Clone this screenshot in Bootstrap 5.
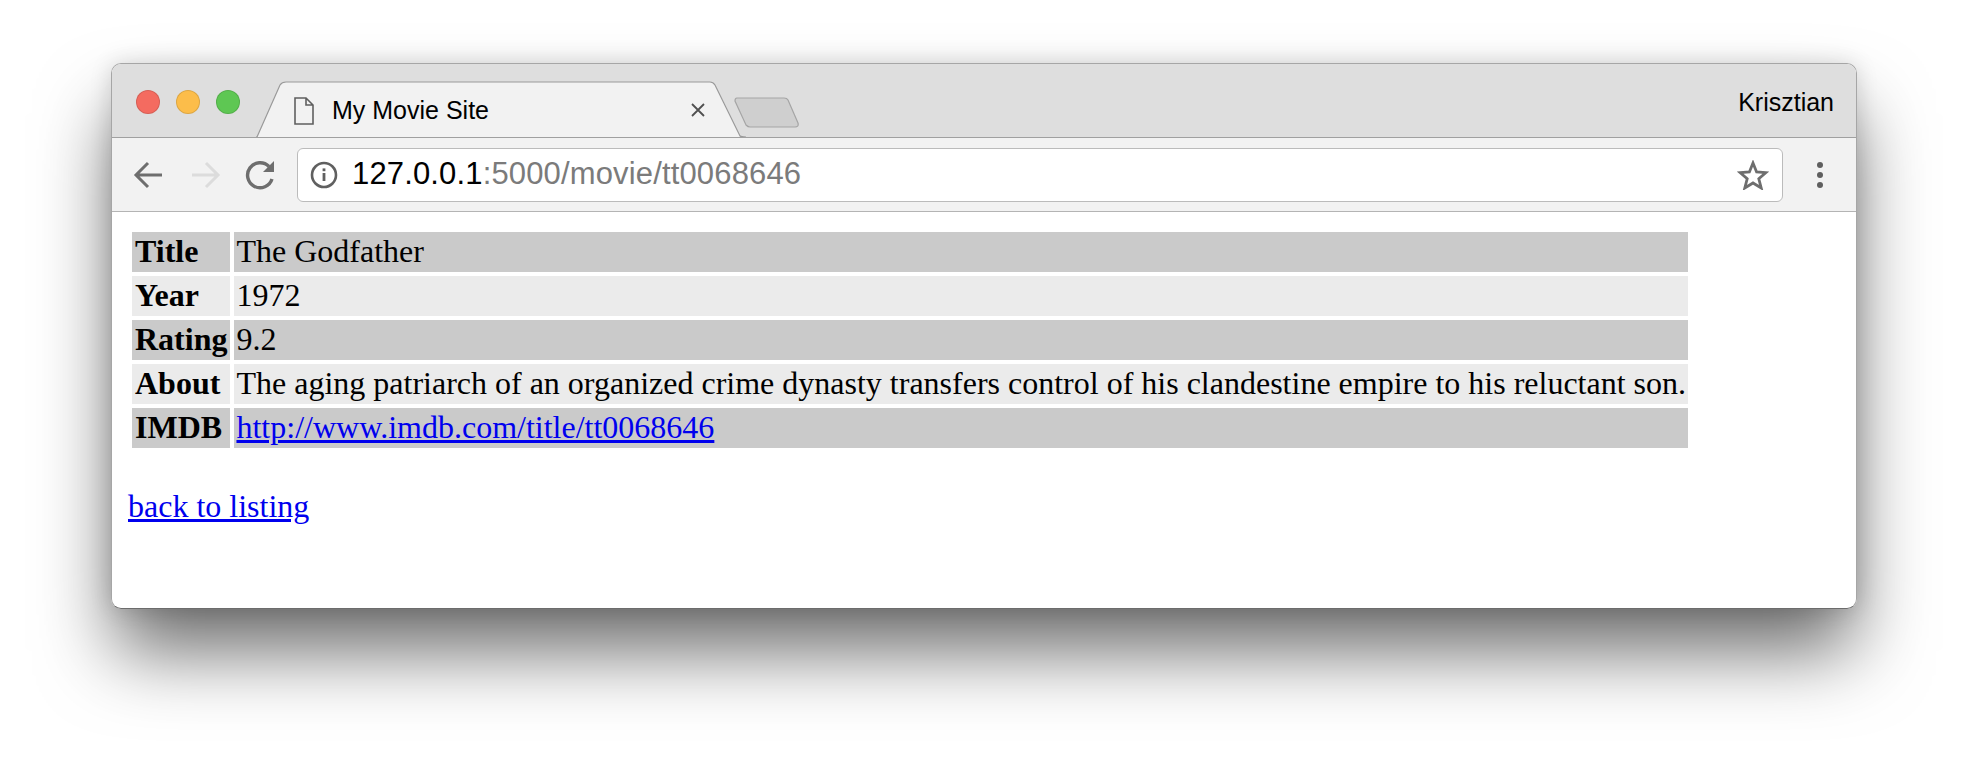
<!DOCTYPE html>
<html lang="en">
<head>
  <meta charset="UTF-8" />
  <title>My Movie Site</title>
  <meta name="viewport" content="width=device-width, initial-scale=1">
  <link href="https://cdn.jsdelivr.net/npm/bootstrap@5.3.3/dist/css/bootstrap.min.css" rel="stylesheet">
  <style>
    body { background: #fff; font-family: "Liberation Sans", Arial, sans-serif; }
    .desk { width: 1968px; height: 768px; overflow: hidden; padding: 63px 111px 0 111px; }
    .win {
      height: 546px; border-radius: 10px; overflow: hidden; background: #fff;
      border: 1px solid #a6a6a6; border-bottom-color: #6c6c6c;
    }
    .win-wrap { border-radius: 10px; box-shadow: 0 46px 76px -4px rgba(0,0,0,.58), 0 0 22px rgba(0,0,0,.14); }
    .strip { height: 74px; background: #dedede; border-bottom: 1px solid #a0a0a0; }
    .lights { gap: 16px; padding: 26px 0 0 24px; }
    .light { width: 24px; height: 24px; border-radius: 50%; border: 1px solid rgba(0,0,0,.12); }
    .tab-shape { left: 144px; top: 17px; }
    .tab-doc { left: 182px; top: 33px; }
    .tab-title { left: 220px; top: 31px; font-size: 25px; line-height: 30px; color: #000; }
    .tab-close { left: 578px; top: 38px; }
    .tab-new { left: 622px; top: 32px; }
    .profile { font-size: 25px; line-height: 30px; color: #000; padding: 23px 22px 0 0; }
    .tools { height: 74px; background: #f2f2f2; border-bottom: 1px solid #b4b4b4; padding-left: 19px; }
    .tool-btn { width: 36px; height: 36px; flex: none; }
    .tool-gap { gap: 20px; width: 166px; flex: none; }
    .omni {
      width: 1486px; height: 54px; flex: none; background: #fff; border: 1px solid #bbb; border-radius: 6px;
      padding: 0 13px 0 12px; font-size: 31px; color: #000; letter-spacing: .15px;
    }
    .omni .dim { color: #7b7b7b; }
    .omni-url { margin-left: 14px; }
    .menu-dots { margin-left: 31px; }
    .page { font-family: "Liberation Serif", "Times New Roman", serif; font-size: 32px; color: #000; padding: 16px 0 0 16px; }
    .page a { color: #0000ee; }
    .info { border-collapse: separate; border-spacing: 4px; width: 1562px; }
    .info th, .info td { padding: 0 3px 2px; height: 40px; line-height: 36px; white-space: nowrap; }
    .info td { padding-left: 2px; padding-right: 2px; }
    .info th { text-align: left; font-weight: 700; }
    .info td { width: 100%; }
    .info tr:nth-child(odd) th, .info tr:nth-child(odd) td { background: #cacaca; }
    .info tr:nth-child(even) th, .info tr:nth-child(even) td { background: #ebebeb; }
    .back { margin: 36px 0 0; line-height: 36px; }
  </style>
</head>
<body>
  <div class="desk">
    <div class="win-wrap">
      <div class="win">
        <div class="strip d-flex justify-content-between position-relative">
          <div class="lights d-flex">
            <span class="light" style="background:#f46b60"></span>
            <span class="light" style="background:#fcbd4a"></span>
            <span class="light" style="background:#5ec753"></span>
          </div>
          <svg class="tab-shape position-absolute" width="490" height="56" viewBox="0 0 490 56">
            <path d="M0 56 H1 L24 4 Q26 1 30 1 H454 Q457 1 459 4 L484 55 Q485 56 490 56" fill="#f2f2f2" stroke="#9a9a9a" stroke-width="1.2"/>
          </svg>
          <svg class="tab-doc position-absolute" width="20" height="28" viewBox="0 0 20 28">
            <path d="M1 1 H12 L19 8 V27 H1 Z M12 1 V8 H19" fill="none" stroke="#5f5f5f" stroke-width="1.6"/>
          </svg>
          <span class="tab-title position-absolute">My Movie Site</span>
          <svg class="tab-close position-absolute" width="16" height="16" viewBox="0 0 16 16">
            <path d="M2 2 L14 14 M14 2 L2 14" stroke="#505050" stroke-width="1.8"/>
          </svg>
          <svg class="tab-new position-absolute" width="66" height="34" viewBox="0 0 66 34">
            <path d="M3 2 H50 Q53 2 54 4 L64 27 Q65 31 61 31 H16 Q14 31 12 29 L1 5 Q1 2 3 2 Z" fill="#cfcfcf" stroke="#a5a5a5" stroke-width="1.2"/>
          </svg>
          <div class="profile">Krisztian</div>
        </div>

        <div class="tools d-flex align-items-center">
          <div class="tool-gap d-flex align-items-center">
            <svg class="tool-btn" viewBox="0 0 36 36"><path d="M31 18 H6 M17 6 L5 18 L17 30" fill="none" stroke="#6e6e6e" stroke-width="3"/></svg>
            <svg class="tool-btn" viewBox="0 0 36 36"><path d="M5 18 H30 M19 6 L31 18 L19 30" fill="none" stroke="#dcdcdc" stroke-width="3"/></svg>
            <svg class="tool-btn" viewBox="0 0 36 36"><path d="M29 22 A12.5 12.5 0 1 1 26 9.5" fill="none" stroke="#6e6e6e" stroke-width="3.4"/><path d="M31 4 V15 H20 Z" fill="#6e6e6e"/></svg>
          </div>
          <div class="omni d-flex align-items-center">
            <svg width="28" height="28" viewBox="0 0 28 28">
              <circle cx="14" cy="14" r="12" fill="none" stroke="#606060" stroke-width="2.6"/>
              <rect x="12.6" y="12" width="2.8" height="8" fill="#606060"/>
              <rect x="12.6" y="7.4" width="2.8" height="2.8" fill="#606060"/>
            </svg>
            <span class="omni-url">127.0.0.1<span class="dim">:5000/movie/tt0068646</span></span>
            <svg class="ms-auto" width="32" height="30" viewBox="0 0 32 30">
              <path d="M16 3 L19.6 12 L29 12.6 L21.8 18.8 L24.2 28 L16 23 L7.8 28 L10.2 18.8 L3 12.6 L12.4 12 Z" fill="none" stroke="#6e6e6e" stroke-width="2.8"/>
            </svg>
          </div>
          <svg class="menu-dots" width="12" height="30" viewBox="0 0 12 30">
            <circle cx="6" cy="5" r="3" fill="#5f5f5f"/><circle cx="6" cy="15" r="3" fill="#5f5f5f"/><circle cx="6" cy="25" r="3" fill="#5f5f5f"/>
          </svg>
        </div>

        <div class="page">
          <table class="info">
            <tbody>
              <tr><th>Title</th><td>The Godfather</td></tr>
              <tr><th>Year</th><td>1972</td></tr>
              <tr><th>Rating</th><td>9.2</td></tr>
              <tr><th>About</th><td>The aging patriarch of an organized crime dynasty transfers control of his clandestine empire to his reluctant son.</td></tr>
              <tr><th>IMDB</th><td><a href="#">http://www.imdb.com/title/tt0068646</a></td></tr>
            </tbody>
          </table>
          <p class="back"><a href="#">back to listing</a></p>
        </div>
      </div>
    </div>
  </div>
  <script src="https://cdn.jsdelivr.net/npm/bootstrap@5.3.3/dist/js/bootstrap.bundle.min.js"></script>
</body>
</html>
